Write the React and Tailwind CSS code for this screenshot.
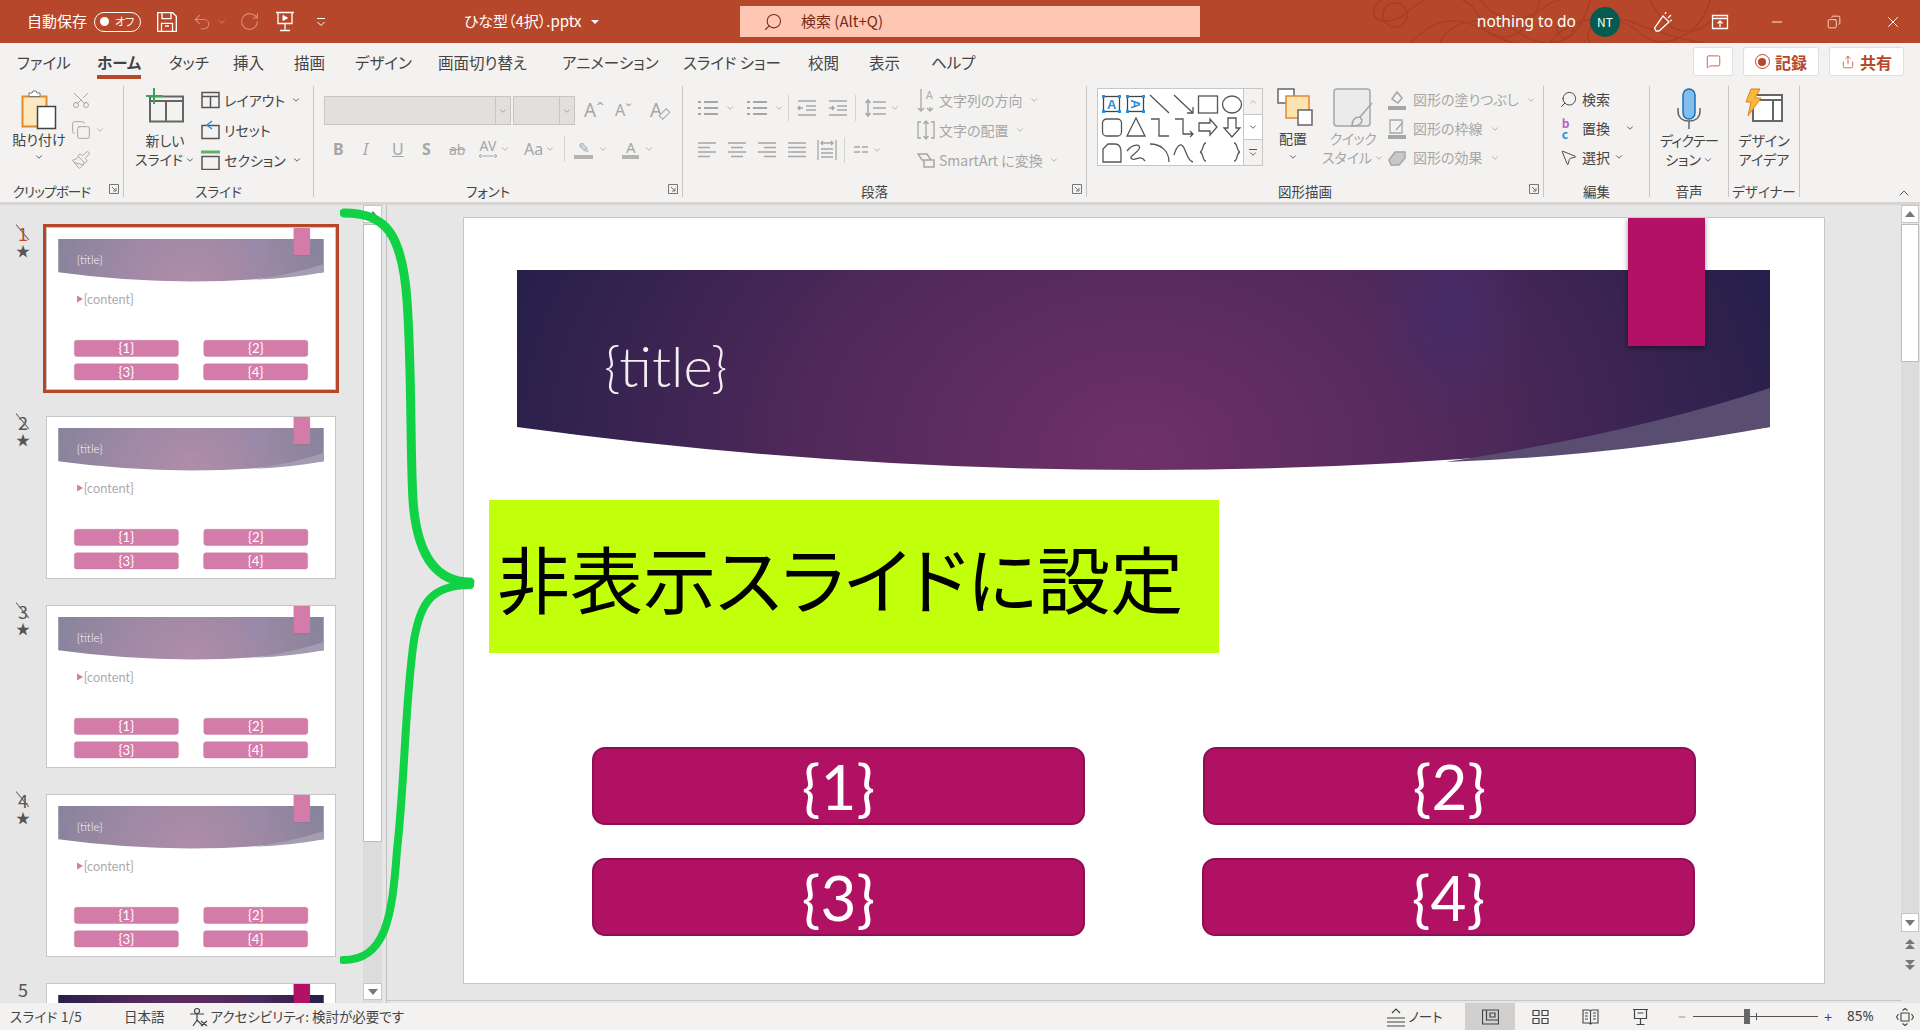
import {
  ChevronDown, ChevronUp, Search, Undo2, RotateCw, Minus, X, Copy, Scissors, Paintbrush,
  MessageSquare, Share, MousePointer2,
} from "lucide-react";

function Chev({ className = "" }) {
  return <ChevronDown size={10} strokeWidth={2} className={"shrink-0 " + className} />;
}

function Gly({ w = 20, h = 20, children, className = "" }) {
  return (
    <svg width={w} height={h} viewBox={`0 0 ${w} ${h}`} fill="none" stroke="currentColor" className={"shrink-0 " + className}>
      {children}
    </svg>
  );
}

function Group({ width, label, launcher, children }) {
  return (
    <div className="relative flex h-[116px] shrink-0" style={{ width }}>
      <div className="flex min-w-0 flex-1 flex-col">
        <div className="h-[94px]">{children}</div>
        <div className={"whitespace-nowrap text-center text-[13.5px] leading-[22px] text-[#444] " + (launcher ? "pr-[20px]" : "")}>{label}</div>
      </div>
      <div className="h-[111px] w-px shrink-0 bg-[#c8c6c4]" />
      {launcher && (
        <svg width="10" height="10" viewBox="0 0 10 10" className="absolute bottom-[8px] right-[5px] text-[#777]" fill="none" stroke="currentColor">
          <path d="M.5 9.5V.5h9v9zM3 3l4 4M7 4v3H4" />
        </svg>
      )}
    </div>
  );
}

function Row({ icon, children, dim, className = "h-[30px]" }) {
  return (
    <div className={"flex items-center gap-[4px] whitespace-nowrap text-[14px] " + (dim ? "text-[#a6a6a6] " : "text-[#444] ") + className}>
      {icon}
      {children}
    </div>
  );
}

function Slide({ hidden, children }) {
  const buttons = [
    { t: "{1}", x: "left-[128px] top-[529px]" },
    { t: "{2}", x: "left-[739px] top-[529px]" },
    { t: "{3}", x: "left-[128px] top-[640px]" },
    { t: "{4}", x: "left-[738px] top-[640px]" },
  ];
  const id = hidden ? "thumb" : "main";
  return (
    <div className="relative h-[765px] w-[1360px] overflow-hidden bg-white font-['Lato',sans-serif]">
      <div className={hidden ? "absolute inset-0 opacity-55" : "absolute inset-0"}>
        <svg width="1360" height="765" className="absolute left-0 top-0">
          <defs>
            <radialGradient id={id + "Glow"} gradientUnits="userSpaceOnUse" cx="0" cy="0" r="660" gradientTransform="translate(675 235) scale(1 .75)">
              <stop offset="0" stopColor="#6f3167" />
              <stop offset=".5" stopColor="#50295a" />
              <stop offset="1" stopColor="#271f4b" />
            </radialGradient>
            <radialGradient id={id + "Spot"} gradientUnits="userSpaceOnUse" cx="0" cy="0" r="80" gradientTransform="translate(986 92) scale(1 1.5)">
              <stop offset="0" stopColor="#472c68" />
              <stop offset="1" stopColor="#472c68" stopOpacity="0" />
            </radialGradient>
          </defs>
          <path d="M53 52H1306V209Q680 295 53 209Z" fill={`url(#${id}Glow)`} />
          <path d="M53 52H1306V209Q680 295 53 209Z" fill={`url(#${id}Spot)`} />
          <path d="M1306 170V209Q1150 238 982 244Q1170 215 1306 170Z" fill="#5a4d72" />
        </svg>
        <div className="absolute left-[140px] top-[110px] text-[56px] font-light leading-[76px] text-[#f2eef2]">{"{title}"}</div>
        {!children && (
          <div className="absolute left-[142px] top-[300px] flex items-center gap-[3px] text-[60px] leading-[70px] text-[#666]">
            <span className="h-0 w-0 border-y-[16px] border-l-[28px] border-y-transparent border-l-[#b31166]" />{"{content}"}
          </div>
        )}
        <div className="absolute left-[1164px] top-0 h-[128px] w-[77px] bg-[#b31166] shadow-[0_2px_5px_rgba(0,0,0,.45)]" />
        {buttons.map((b) => (
          <div key={b.t} className={"absolute flex h-[78px] w-[493px] items-center justify-center rounded-[13px] border-2 border-[#8e0e52] bg-[#b01163] text-[62px] text-white " + b.x}>
            {b.t}
          </div>
        ))}
      </div>
      {children}
    </div>
  );
}

function Thumb({ n, active, hidden }) {
  return (
    <div className="flex shrink-0">
      <div className="w-[43px] shrink-0 pl-[16px] text-[#555]">
        <div className="relative h-[18px] w-[14px] text-center text-[18px] leading-[18px]">
          <span className={active ? "text-[#c8452a]" : ""}>{n}</span>
          {hidden && <span className="absolute left-0 top-0 h-px w-[20px] origin-left rotate-[50deg] bg-[#666]" />}
        </div>
        {hidden && <div className="text-[14px] leading-[16px]">★</div>}
      </div>
      <div className={"h-[169px] w-[296px] shrink-0 border-[3px] " + (active ? "border-[#b7472a]" : "border-transparent")}>
        <div className="h-[163px] w-[290px] overflow-hidden border border-[#c6c6c6]">
          <div className="origin-top-left scale-[0.2119]">
            <Slide hidden={hidden} />
          </div>
        </div>
      </div>
    </div>
  );
}

function Brace() {
  return (
    <svg width="140" height="770" viewBox="0 0 140 770" className="pointer-events-none absolute left-[340px] top-0" fill="none" stroke="#10d244" strokeLinecap="round">
      <path d="M4 8C45 8 62 27 67 95C72 165 70 245 73 295C76 340 90 377 130 377" strokeWidth="9" />
      <path d="M130 380C90 380 80 400 74 435C65 495 65 575 57 645C52 715 45 755 3 755" strokeWidth="8" />
    </svg>
  );
}

function ScrollArrow({ up, className = "h-[18px]" }) {
  return (
    <div className={"flex w-full shrink-0 items-center justify-center border border-[#c6c6c6] bg-white " + className}>
      <div className={"h-0 w-0 border-x-[5px] border-x-transparent " + (up ? "border-b-[6px] border-b-[#777]" : "border-t-[6px] border-t-[#777]")} />
    </div>
  );
}

function Shapes() {
  const rows = [6, 29, 54];
  const Cell = ({ c, r, children }) => <g transform={`translate(${4 + 24 * c} ${rows[r]})`}>{children}</g>;
  const Box = ({ c, vertical }) => (
    <Cell c={c} r={0}>
      <rect x="1.5" y="1.5" width="16" height="15" stroke="#444" />
      <text x="5" y="14" fontSize="13" fontWeight="700" fill="#2a8fd8" stroke="none" fontFamily="Liberation Sans" transform={vertical ? "rotate(90 9.5 9)" : undefined}>A</text>
      {[[0, 0], [16, 0], [0, 15], [16, 15]].map(([x, y]) => (
        <rect key={x + "-" + y} x={x} y={y} width="3" height="3" fill="#2a8fd8" stroke="none" />
      ))}
    </Cell>
  );
  return (
    <svg width="147" height="76" viewBox="0 0 147 76" fill="none" stroke="#555" strokeWidth="1.3">
      <Box c={0} />
      <Box c={1} vertical />
      <Cell c={2} r={0}><path d="M0 0l19 18" /></Cell>
      <Cell c={3} r={0}><path d="M0 0l19 18M19 12v6h-6" /></Cell>
      <Cell c={4} r={0}><rect x="0.5" y="1" width="19" height="17" /></Cell>
      <Cell c={5} r={0}><ellipse cx="10" cy="9.5" rx="9.5" ry="8.5" /></Cell>
      <Cell c={0} r={1}><rect x="0.5" y="1" width="19" height="17" rx="4" /></Cell>
      <Cell c={1} r={1}><path d="M10 0 1 18h18z" /></Cell>
      <Cell c={2} r={1}><path d="M1 1h8v17h10" /></Cell>
      <Cell c={3} r={1}><path d="M1 1h8v15h10M16 13l3 3-3 3" /></Cell>
      <Cell c={4} r={1}><path d="M1 5h11V1l7 8-7 8v-4H1z" /></Cell>
      <Cell c={5} r={1}><path d="M6 0h8v10h4l-8 9-8-9h4z" /></Cell>
      <Cell c={0} r={2}><path d="M1 19V6l5-5h7c5 0 6 4 6 8v10z" /></Cell>
      <Cell c={1} r={2}><path d="M1 8c6-8 15-7 12-2S2 14 6 16s8-5 13 2" /></Cell>
      <Cell c={2} r={2}><path d="M0 1c11 0 19 7 19 18" /></Cell>
      <Cell c={3} r={2}><path d="M0 12C3 2 7-1 10 5s4 13 9 14" /></Cell>
      <Cell c={4} r={2}><path d="M8 0C4 0 6 8 2 9c4 1 2 9 6 9" /></Cell>
      <Cell c={5} r={2}><path d="M12 0c4 0 2 8 6 9-4 1-2 9-6 9" /></Cell>
    </svg>
  );
}

export default function App() {
  const tabs = [
    { t: "ファイル", w: "w-[80px]" },
    { t: "ホーム", w: "w-[72px]" },
    { t: "タッチ", w: "w-[64px]" },
    { t: "挿入", w: "w-[61px]" },
    { t: "描画", w: "w-[61px]" },
    { t: "デザイン", w: "w-[83px]" },
    { t: "画面切り替え", w: "w-[124px]" },
    { t: "アニメーション", w: "w-[121px]" },
    { t: "スライド ショー", w: "w-[125px]" },
    { t: "校閲", w: "w-[61px]" },
    { t: "表示", w: "w-[62px]" },
    { t: "ヘルプ", w: "w-[50px]" },
  ];

  return (
    <div className="relative flex h-[1030px] w-[1920px] flex-col overflow-hidden bg-[#e6e6e6] font-['Noto_Sans_CJK_JP','Noto_Sans',sans-serif] [font-feature-settings:'palt']">
      {/* TITLE BAR */}
      <div className="relative flex h-[43px] shrink-0 items-center overflow-hidden bg-[#b7472a] text-white">
        <svg width="380" height="43" viewBox="0 0 380 43" className="absolute left-[1350px] top-0 text-[#a63f24]" fill="none" stroke="currentColor" strokeWidth="1.5">
          <path d="M30 0c-20 20 10 30 30 10s60-20 70 10 50 20 60-20M90 43c10-25 50-30 80-10s60 10 70-33M200 43c20-30 70-30 90-10s60 5 70-33M300 0c20 40 50 40 70 10M60 43c20-20 40-30 70-15s40 20 55 15M130 0c15 20 40 25 60 10s40-15 55-10M240 43c-10-20 20-30 45-20s40 15 70 20" />
          <circle cx="45" cy="15" r="12" />
          <circle cx="215" cy="30" r="8" />
        </svg>
        <span className="ml-[27px] w-[60px] whitespace-nowrap text-[15px]">自動保存</span>
        <div className="ml-[7px] flex h-[20px] w-[47px] items-center rounded-full border border-white pl-[5px]">
          <span className="h-[9px] w-[9px] rounded-full bg-white" />
          <span className="ml-[6px] text-[11px]">オフ</span>
        </div>
        <Gly w={20} h={20} className="ml-[16px]">
          <path d="M.7.7h15l3.6 3.6v15H.7zM5 .7v6h9v-6M4.5 19.3v-8h11v8M8 14h4" strokeWidth="1.3" />
        </Gly>
        <Undo2 size={20} strokeWidth={1.3} className="ml-[15px] text-[#d98a74]" />
        <Chev className="ml-[5px] text-[#d98a74]" />
        <RotateCw size={21} strokeWidth={1.3} className="ml-[12px] text-[#d98a74]" />
        <Gly w={20} h={21} className="ml-[15px]">
          <path d="M1 1.5h18M3 1.5v11h14v-11M10 12.5v6M5 19.5h10" strokeWidth="1.3" />
          <path d="M8 4.5l4.500 2.500L8 9.500z" fill="currentColor" />
        </Gly>
        <Gly w={10} h={12} className="ml-[21px]">
          <path d="M1 2.5h8M1.5 6l3.5 3.5L8.5 6" />
        </Gly>
        <div className="absolute left-[464px] top-0 flex h-[43px] items-center whitespace-nowrap text-[15px]">
          ひな型（4択）.pptx
          <span className="ml-[9px] h-0 w-0 border-x-[4px] border-t-[4px] border-x-transparent border-t-white" />
        </div>
        <div className="absolute left-[740px] top-[6px] flex h-[31px] w-[460px] items-center bg-[#fec7b4] text-[15px] text-[#7a2a17]">
          <Search size={20} strokeWidth={1.3} className="ml-[23px] -scale-x-100" />
          <span className="ml-[18px] whitespace-nowrap">検索 (Alt+Q)</span>
        </div>
        <div className="relative ml-auto flex items-center">
          <span className="whitespace-nowrap font-['Noto_Sans',sans-serif] text-[15.5px]">nothing to do</span>
          <div className="ml-[14px] flex h-[30px] w-[30px] items-center justify-center rounded-full bg-[#065b50] text-[12px]">NT</div>
          <Gly w={20} h={22} className="ml-[33px]">
            <path d="M3 20l-1.5-3L10 5l6 6-10 9zM12 3l1-2M15 7l3-3M17 10l2-1" strokeWidth="1.3" />
          </Gly>
          <Gly w={18} h={16} className="ml-[38px]">
            <path d="M1.5 1.5h15v13h-15zM1.5 4.5h15M9 13V7M6.5 9.5 9 7l2.5 2.5" strokeWidth="1.3" />
          </Gly>
          <Minus size={16} strokeWidth={1.3} className="ml-[40px]" />
          <Copy size={14} strokeWidth={1.3} className="ml-[42px] scale-x-[-1]" />
          <X size={18} strokeWidth={1.3} className="ml-[43px] mr-[18px]" />
        </div>
      </div>

      {/* RIBBON */}
      <div className="relative shrink-0 bg-[#f3f2f1] text-[#444]">
        <div className="flex h-[37px]">
          <div className="flex pl-[17px] text-[15.5px] leading-[38px]">
            {tabs.map((t) => (
              <div key={t.t} className={"relative h-[37px] whitespace-pre " + t.w + (t.t === "ホーム" ? " font-bold" : "")}>
                {t.t}
                {t.t === "ホーム" && <span className="absolute bottom-[1px] left-0 h-[4px] w-[44px] bg-[#b7472a]" />}
              </div>
            ))}
          </div>
          <div className="ml-auto flex gap-[10px] pr-[16px] pt-[4px] text-[#b7472a]">
            <div className="flex h-[29px] w-[40px] items-center justify-center rounded-[3px] border border-[#e1dfdd] bg-white">
              <MessageSquare size={15} strokeWidth={1.3} />
            </div>
            <div className="flex h-[29px] w-[76px] items-center justify-center gap-[5px] rounded-[3px] border border-[#e1dfdd] bg-white text-[16px] font-bold">
              <span className="flex h-[15px] w-[15px] items-center justify-center rounded-full border border-[#b7472a]"><span className="h-[8px] w-[8px] rounded-full bg-[#b7472a]" /></span>記録
            </div>
            <div className="flex h-[29px] w-[75px] items-center justify-center gap-[5px] rounded-[3px] border border-[#e1dfdd] bg-white text-[16px] font-bold">
              <Share size={14} strokeWidth={1.3} />共有
            </div>
          </div>
        </div>

        <div className="flex h-[122px] pt-[6px]">
          {/* CLIPBOARD */}
          <Group width={124} label={<span className="tracking-[-0.8px]">クリップボード</span>} launcher>
            <div className="flex">
              <div className="ml-[9px] flex w-[60px] flex-col items-center text-[14px] leading-[19px]">
                <svg width="36" height="40" viewBox="0 0 36 40" fill="none" className="mt-[4px]">
                  <path d="M1.5 6.5h24v30h-24z" fill="#fde9bf" stroke="#e08b2d" strokeWidth="2" />
                  <path d="M8 6.5V3h3l1-2h3l1 2h3v3.5z" fill="#fff" stroke="#777" />
                  <path d="M16.5 16.500h18v22h-18z" fill="#fff" stroke="#444" strokeWidth="1.5" />
                </svg>
                <span className="whitespace-nowrap">貼り付け</span>
                <Chev className="mt-[3px]" />
              </div>
              <div className="ml-[2px] flex flex-col gap-[10px] pt-[4px] text-[#a6a6a6]">
                <Scissors size={20} strokeWidth={1.2} className="-rotate-90" />
                <div className="flex items-center gap-[4px]"><Copy size={20} strokeWidth={1.2} /><Chev /></div>
                <Paintbrush size={20} strokeWidth={1.2} />
              </div>
            </div>
          </Group>

          {/* SLIDES */}
          <Group width={190} label="スライド">
            <div className="flex">
              <div className="ml-[12px] flex w-[58px] flex-col items-center text-[14px] leading-[19px]">
                <svg width="38" height="36" viewBox="0 0 38 36" fill="none" className="mt-[2px]">
                  <path d="M4 8.5h33v25H4zM4 13h33M20 13v20" stroke="#666" strokeWidth="2" />
                  <path d="M0 8h17M8 0v16" stroke="#3aa655" strokeWidth="2" />
                </svg>
                <span className="mt-[7px]">新しい</span>
                <span className="flex items-center gap-[2px] whitespace-nowrap">スライド<Chev /></span>
              </div>
              <div className="-mt-[1px] ml-[7px]">
                <Row icon={<Gly w={19} h={18}><path d="M1 1.5h17v15H1zM1 5.5h17M9.5 5.5v11" stroke="#555" strokeWidth="1.5" /></Gly>}>レイアウト<Chev className="ml-[2px]" /></Row>
                <Row icon={<Gly w={19} h={20}><path d="M1 5.5h17v13H1z" stroke="#555" strokeWidth="1.5" /><path d="M11 1 6 5l5 4" stroke="#2a8fd8" strokeWidth="1.5" /></Gly>}>リセット</Row>
                <Row icon={<Gly w={19} h={20}><path d="M0 2h19" stroke="#5eb26c" strokeWidth="3" /><path d="M1 6.5h17v13H1z" stroke="#555" strokeWidth="1.5" /></Gly>}>セクション<Chev className="ml-[2px]" /></Row>
              </div>
            </div>
          </Group>

          {/* FONT */}
          <Group width={369} label="フォント" launcher>
            <div className="ml-[10px] mt-[10px] flex items-center">
              <div className="flex h-[29px] w-[187px] border border-[#c8c6c4] bg-[#e1e0df]">
                <div className="flex-1" /><div className="flex w-[15px] items-center justify-center border-l border-[#c8c6c4] text-[#999]"><Chev /></div>
              </div>
              <div className="ml-[2px] flex h-[29px] w-[62px] border border-[#c8c6c4] bg-[#e1e0df]">
                <div className="flex-1" /><div className="flex w-[15px] items-center justify-center border-l border-[#c8c6c4] text-[#999]"><Chev /></div>
              </div>
              <span className="ml-[9px] w-[31px] font-['Noto_Sans',sans-serif] text-[19px] leading-[29px] text-[#a6a6a6]">Aˆ</span>
              <span className="w-[35px] font-['Noto_Sans',sans-serif] text-[16px] leading-[29px] text-[#a6a6a6]">Aˇ</span>
              <span className="relative font-['Noto_Sans',sans-serif] text-[19px] leading-[29px] text-[#a6a6a6]">
                A
                <span className="absolute left-[9px] top-[15px] h-[6px] w-[11px] -rotate-45 border border-[#a6a6a6] bg-[#f3f2f1]" />
              </span>
            </div>
            <div className="ml-[19px] mt-[9px] flex h-[30px] items-center font-['Noto_Sans',sans-serif] text-[#a6a6a6]">
              <span className="w-[30px] text-[16px] font-bold">B</span>
              <span className="w-[29px] text-[16px] italic">I</span>
              <span className="w-[30px] text-[16px] underline">U</span>
              <span className="w-[27px] text-[16px] font-bold">S</span>
              <span className="w-[29px] text-[14px] line-through">ab</span>
              <span className="flex flex-col items-center text-[14px] leading-[14px]">AV<Gly w={20} h={6}><path d="M1 3h18M3 1 1 3l2 2M17 1l2 2-2 2" /></Gly></span><Chev className="ml-[2px]" />
              <span className="ml-[14px] text-[16px]">Aa</span><Chev className="ml-[2px]" />
              <span className="ml-[9px] mr-[9px] h-[26px] w-px bg-[#d5d3d1]" />
              <div className="flex flex-col items-center"><span className="text-[14px] leading-[15px]">✎</span><span className="h-[4px] w-[19px] bg-[#b5b3b0]" /></div><Chev className="ml-[5px]" />
              <div className="ml-[14px] flex flex-col items-center"><span className="text-[15px] leading-[15px]">A</span><span className="h-[4px] w-[17px] bg-[#b5b3b0]" /></div><Chev className="ml-[5px]" />
            </div>
          </Group>

          {/* PARAGRAPH */}
          <Group width={404} label="段落" launcher>
            <div className="ml-[14px] flex text-[#a6a6a6]">
              <div className="w-[220px] pt-[7px]">
                <div className="flex h-[30px] items-center">
                  <Gly w={22} h={20}><path d="M7 4h14M7 10h14M7 16h14M1 4h3M1 10h3M1 16h3" strokeWidth="2" /></Gly><Chev className="ml-[6px]" />
                  <Gly w={22} h={20} className="ml-[11px]"><path d="M7 4h14M7 10h14M7 16h14M1 4h3M1 10h3M1 16h3" strokeWidth="2" /></Gly><Chev className="ml-[6px]" />
                  <span className="ml-[4px] mr-[8px] h-[26px] w-px bg-[#d5d3d1]" />
                  <Gly w={20} h={20}><path d="M1 3h18M9 8h10M9 12h10M1 17h18M6 10H1M3 8l-2 2 2 2" strokeWidth="1.5" /></Gly>
                  <Gly w={20} h={20} className="ml-[11px]"><path d="M1 3h18M9 8h10M9 12h10M1 17h18M1 10h5M4 8l2 2-2 2" strokeWidth="1.5" /></Gly>
                  <span className="ml-[7px] mr-[8px] h-[26px] w-px bg-[#d5d3d1]" />
                  <Gly w={22} h={20}><path d="M9 4h13M9 10h13M9 16h13M4 2v16M1.5 5 4 2l2.5 3M1.5 15 4 18l2.5-3" strokeWidth="1.5" /></Gly><Chev className="ml-[4px]" />
                </div>
                <div className="mt-[12px] flex h-[30px] items-center">
                  <Gly w={20} h={20}><path d="M1 3h18M1 7.5h12M1 12h18M1 16.5h12" strokeWidth="1.5" /></Gly>
                  <Gly w={20} h={20} className="ml-[10px]"><path d="M1 3h18M4 7.5h12M1 12h18M4 16.5h12" strokeWidth="1.5" /></Gly>
                  <Gly w={20} h={20} className="ml-[10px]"><path d="M1 3h18M7 7.5h12M1 12h18M7 16.5h12" strokeWidth="1.5" /></Gly>
                  <Gly w={20} h={20} className="ml-[10px]"><path d="M1 3h18M1 7.5h18M1 12h18M1 16.5h18" strokeWidth="1.5" /></Gly>
                  <Gly w={20} h={22} className="ml-[10px]"><path d="M1 1v20M19 1v20M4 4h12M6 2 4 4l2 2M14 2l2 2-2 2M4 10h12M4 14h12M4 18h12" strokeWidth="1.3" /></Gly>
                  <span className="ml-[7px] mr-[9px] h-[26px] w-px bg-[#d5d3d1]" />
                  <Gly w={14} h={10}><path d="M0 2h6M8 2h6M0 7h6M8 7h6" strokeWidth="1.5" /></Gly><Chev className="ml-[4px]" />
                </div>
              </div>
              <div className="-mt-[1px]">
                <Row dim icon={<Gly w={18} h={26}><path d="M4 2v22M1 21l3 3 3-3M13 20v4M10 21l3 3 3-3" strokeWidth="1.3" /><text x="9" y="12" fontSize="11" fill="currentColor" stroke="none">A</text></Gly>}>文字列の方向<Chev className="ml-[2px]" /></Row>
                <Row dim icon={<Gly w={18} h={22}><path d="M4 3H1v16h3M14 3h3v16h-3M9 2v18M6.5 5 9 2l2.500 3M6.500 17 9 20l2.500-3" strokeWidth="1.3" /></Gly>}>文字の配置<Chev className="ml-[2px]" /></Row>
                <Row dim icon={<Gly w={18} h={20}><path d="M1 4h9l4 6H5zM7 10h10v7H7z" strokeWidth="1.5" /></Gly>}>SmartArt に変換<Chev className="ml-[2px]" /></Row>
              </div>
            </div>
          </Group>

          {/* DRAWING */}
          <Group width={457} label="図形描画" launcher>
            <div className="ml-[10px] mt-[2px] flex">
              <div className="h-[78px] w-[147px] border border-[#c8c6c4] bg-white">
                <Shapes />
              </div>
              <div className="flex h-[78px] w-[19px] flex-col border-y border-r border-[#c8c6c4]">
                <div className="flex h-[25px] items-center justify-center text-[#aaa]"><ChevronUp size={10} /></div>
                <div className="flex h-[26px] items-center justify-center border-y border-[#c8c6c4] bg-white"><Chev /></div>
                <div className="flex flex-1 flex-col items-center justify-center"><span className="mb-[1px] h-px w-[8px] bg-[#555]" /><Chev className="-my-[2px]" /></div>
              </div>
              <div className="flex w-[60px] flex-col items-center text-[14px] leading-[19px]">
                <svg width="36" height="38" viewBox="0 0 36 38" fill="none" className="ml-[4px]">
                  <path d="M1 1h16v14H1z" fill="#fff" stroke="#666" strokeWidth="1.5" />
                  <path d="M9 8h23v22H9z" fill="#fde3b0" stroke="#e08b2d" strokeWidth="1.5" />
                  <path d="M21 22h14v15H21z" fill="#fff" stroke="#666" strokeWidth="1.5" />
                </svg>
                <span className="mt-[3px]">配置</span>
                <Chev className="mt-[4px]" />
              </div>
              <div className="flex w-[60px] flex-col items-center text-[14px] leading-[19px] text-[#a6a6a6]">
                <svg width="40" height="40" viewBox="0 0 40 40" fill="none" stroke="#a6a6a6" strokeWidth="1.5" className="mb-[1px]">
                  <rect x="1" y="1" width="36" height="37" rx="3" fill="#ebebeb" />
                  <path d="M39 15 27 29M27 29c-5 0-8 3-8 9 6 0 10-2 10-6z" />
                </svg>
                <span className="tracking-[-0.5px]">クイック</span>
                <span className="flex items-center gap-[2px] whitespace-nowrap">スタイル<Chev /></span>
              </div>
              <div className="-mt-[3px] ml-[5px]">
                <Row dim className="h-[29px] gap-[7px]" icon={<Gly w={18} h={22}><path d="M4 10 9 3l5 6-4 5z" strokeWidth="1.5" /><path d="M0 19h18" strokeWidth="4" /></Gly>}>図形の塗りつぶし<Chev /></Row>
                <Row dim className="h-[29px] gap-[7px]" icon={<Gly w={18} h={22}><path d="M2 2h12v13H2zM15 4 8 12" strokeWidth="1.3" /><path d="M0 19h18" strokeWidth="4" /></Gly>}>図形の枠線<Chev /></Row>
                <Row dim className="h-[29px] gap-[7px]" icon={<Gly w={18} h={18}><path d="M1 11 7 3h10v6l-6 7H3z" strokeWidth="1.5" fill="#c8c8c8" /></Gly>}>図形の効果<Chev /></Row>
              </div>
            </div>
          </Group>

          {/* EDITING */}
          <Group width={106} label="編集">
            <div className="-mt-[1px] ml-[15px]">
              <Row className="h-[28px]" icon={<Search size={19} strokeWidth={1.2} className="-scale-x-100" />}>検索</Row>
              <Row className="h-[30px]" icon={<span className="w-[19px] text-[12px] font-bold leading-[11px] text-[#b565c4]">&nbsp;b<br /><span className="text-[#2a8fd8]">&nbsp;c</span></span>}>置換<Chev className="ml-[11px]" /></Row>
              <Row className="h-[28px]" icon={<MousePointer2 size={19} strokeWidth={1.2} />}>選択<Chev /></Row>
            </div>
          </Group>

          {/* VOICE */}
          <Group width={79} label="音声">
            <div className="flex flex-col items-center text-[14px] leading-[19px]">
              <svg width="24" height="41" viewBox="0 0 24 41" fill="none" className="mt-[2px]">
                <rect x="6" y="1" width="12" height="30" rx="6" fill="#83bdee" stroke="#1a6fb8" strokeWidth="1.5" />
                <path d="M1 20v3c0 7 5 10 11 10s11-3 11-10v-3M12 33v8" stroke="#666" strokeWidth="1.5" />
              </svg>
              <span className="mt-[2px] whitespace-nowrap tracking-[-0.8px]">ディクテー</span>
              <span className="flex items-center gap-[2px]">ション<Chev /></span>
            </div>
          </Group>

          {/* DESIGNER */}
          <Group width={71} label="デザイナー">
            <div className="flex flex-col items-center text-[14px] leading-[19px]">
              <svg width="38" height="36" viewBox="0 0 38 36" fill="none" className="mt-[2px]">
                <path d="M8 7h29v26H8zM8 12h29M28 12v21" stroke="#666" strokeWidth="2" fill="#fff" />
                <path d="M6 1h9l-5 9h6L3 28l3-14H1z" fill="#f6b93b" stroke="#e0801d" />
              </svg>
              <span className="mt-[7px] whitespace-nowrap">デザイン</span>
              <span>アイデア</span>
            </div>
          </Group>
          <ChevronUp size={16} strokeWidth={1.3} className="absolute bottom-[1px] right-[8px]" />
        </div>
      </div>
      <div className="h-[3px] shrink-0 bg-[#d6d5d3]" />

      {/* WORK AREA */}
      <div className="relative flex min-h-0 flex-1">
        {/* THUMBNAILS */}
        <div className="flex h-full w-[387px] shrink-0 border-r border-[#bdbdbd]">
          <div className="flex h-full w-[363px] shrink-0 flex-col gap-[20px] overflow-hidden pt-[19px]">
            <Thumb n={1} active hidden />
            <Thumb n={2} hidden />
            <Thumb n={3} hidden />
            <Thumb n={4} hidden />
            <Thumb n={5} />
          </div>
          <div className="flex h-full w-[19px] shrink-0 flex-col bg-[#dcdcdc] pb-[3px]">
            <ScrollArrow up />
            <div className="mt-px h-[618px] w-full shrink-0 border border-[#bdbdbd] bg-white" />
            <ScrollArrow className="mt-auto h-[17px]" />
          </div>
        </div>

        {/* SLIDE */}
        <div className="mb-[2px] min-w-0 flex-1 border-b border-[#c6c6c6] pl-[76px] pt-[12px]">
          <div className="w-fit border border-[#c6c6c6]">
            <Slide>
              <div className="absolute left-[25px] top-[282px] flex h-[153px] w-[730px] items-center whitespace-nowrap bg-[#c1ff0a] pl-[8px] font-['Noto_Sans_CJK_JP',sans-serif] text-[73px] text-black">
                非表示スライドに設定
              </div>
            </Slide>
          </div>
        </div>

        {/* RIGHT SCROLLBAR */}
        <div className="flex h-full w-[19px] shrink-0 flex-col pr-[1px]">
          <ScrollArrow up />
          <div className="mt-px h-[138px] w-full shrink-0 border border-[#bdbdbd] bg-white" />
          <div className="w-full flex-1 bg-[#dcdcdc]" />
          <ScrollArrow className="h-[19px]" />
          <div className="flex h-[71px] shrink-0 flex-col items-center gap-[10px] pt-[7px] text-[#777]">
            <svg width="12" height="11" viewBox="0 0 12 11" fill="currentColor"><path d="M6 0l5 5H1zM6 5l5 5H1z" /></svg>
            <svg width="12" height="11" viewBox="0 0 12 11" fill="currentColor"><path d="M6 10l5-5H1zM6 5l5-5H1z" /></svg>
          </div>
        </div>

        <Brace />
      </div>

      {/* STATUS BAR */}
      <div className="flex h-[27px] shrink-0 items-center bg-[#f3f2f1] text-[13.5px] text-[#444]">
        <span className="ml-[10px] w-[114px] whitespace-nowrap tracking-[0.3px]">スライド 1/5</span>
        <span className="whitespace-nowrap">日本語</span>
        <Gly w={19} h={20} className="ml-[24px]">
          <circle cx="8" cy="4" r="2.5" strokeWidth="1.2" />
          <path d="M1 7h14M8 7v6l-4 6M8 13l6 6M12 14l6 5M18 14l-6 5" strokeWidth="1.2" />
        </Gly>
        <span className="ml-[3px] whitespace-nowrap">アクセシビリティ: 検討が必要です</span>
        <div className="ml-auto flex h-full items-center">
          <Gly w={20} h={20}>
            <path d="M1 11h18M1 15h18M1 19h18M6 6l4-4 4 4" strokeWidth="1.2" />
          </Gly>
          <span className="ml-[2px] w-[57px] whitespace-nowrap">ノート</span>
          <div className="flex h-full w-[50px] items-center justify-center bg-[#d2d0ce]">
            <Gly w={17} h={16}><path d="M.5 1h16v14H.5zM4.5 1v10h12M8 4h5v4H8z" strokeWidth="1.2" /></Gly>
          </div>
          <Gly w={17} h={16} className="ml-[17px]"><path d="M1 1.5h6v5H1zM10 1.5h6v5h-6zM1 9.5h6v5H1zM10 9.5h6v5h-6z" strokeWidth="1.2" /></Gly>
          <Gly w={17} h={16} className="ml-[33px]"><path d="M1 1h6l1.5 1L10 1h6v13h-6l-1.5 1L7 14H1zM8.5 2v13M3 4h3M3 7h3M3 10h3M11 4h3M11 7h3M11 10h3" strokeWidth="1.1" /></Gly>
          <Gly w={17} h={18} className="ml-[33px]"><path d="M1 1.5h15M2.5 1.5v9h12v-9M8.5 10.5V16M4.5 16.5h8M5.5 5h6" strokeWidth="1.2" /></Gly>
          <Minus size={10} strokeWidth={1.3} className="ml-[28px]" />
          <div className="relative ml-[6px] h-px w-[125px] bg-[#555]">
            <span className="absolute left-[51px] top-[-7px] h-[15px] w-[6px] bg-[#666]" />
            <span className="absolute left-[63px] top-[-3px] h-[7px] w-px bg-[#555]" />
          </div>
          <span className="ml-[6px] text-[14px] leading-[14px]">+</span>
          <span className="ml-[15px] w-[36px] font-['Noto_Sans',sans-serif]">85%</span>
          <Gly w={18} h={18} className="ml-[13px] mr-[6px]">
            <path d="M5 5h8v8H5zM2.5 6 .5 9l2 3M15.5 6l2 3-2 3M6.5 2.5 9 .5l2.5 2M6.5 15.5l2.5 2 2.5-2" strokeWidth="1.1" />
          </Gly>
        </div>
      </div>
    </div>
  );
}
